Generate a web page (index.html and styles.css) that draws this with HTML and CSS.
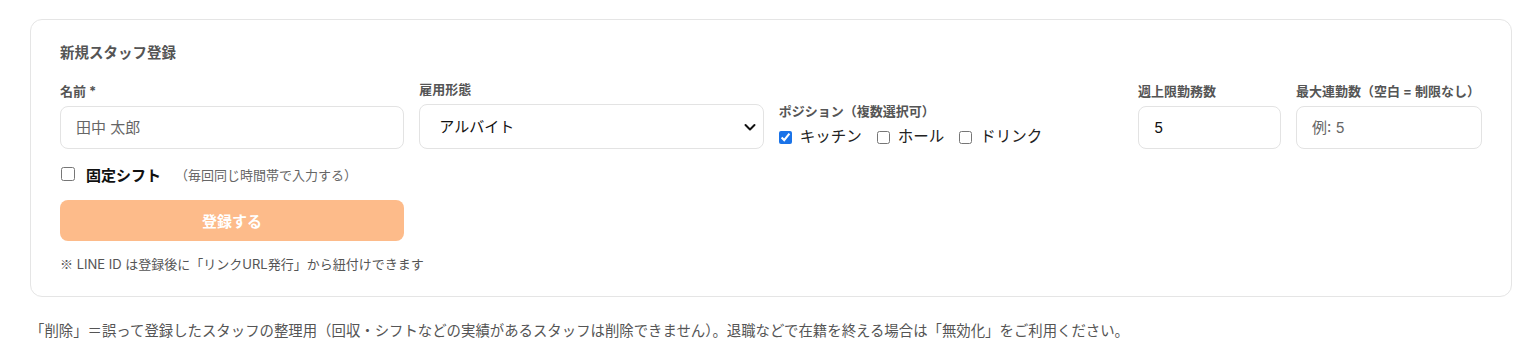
FILE: index.html
```html
<!DOCTYPE html>
<html lang="ja">
<head>
    <meta charset="UTF-8">
    <meta name="viewport" content="width=device-width, initial-scale=1.0">
    <title>スタッフ管理</title>
    <link rel="stylesheet" href="styles.css">
</head>
<body>
    <div class="page">
        <form class="card" id="staffForm">
            <h2 class="card-title">新規スタッフ登録</h2>

            <div class="field-row">
                <div class="field">
                    <label for="name">名前 *</label>
                    <input type="text" id="name" placeholder="田中 太郎">
                </div>

                <div class="field">
                    <label for="employment">雇用形態</label>
                    <select id="employment" class="select">
                        <option>アルバイト</option>
                        <option>パート</option>
                        <option>社員</option>
                    </select>
                </div>

                <div class="field">
                    <label>ポジション（複数選択可）</label>
                    <div class="check-group">
                        <label class="check"><input type="checkbox" checked> キッチン</label>
                        <label class="check"><input type="checkbox"> ホール</label>
                        <label class="check"><input type="checkbox"> ドリンク</label>
                    </div>
                </div>

                <div class="field">
                    <label for="weekly">週上限勤務数</label>
                    <input type="text" id="weekly" value="5">
                </div>

                <div class="field">
                    <label for="maxRun">最大連勤数（空白 = 制限なし）</label>
                    <input type="text" id="maxRun" placeholder="例: 5">
                </div>
            </div>

            <div class="fixed-shift">
                <input type="checkbox" id="fixed">
                <label for="fixed" class="fixed-label">固定シフト</label>
                <span class="hint">（毎回同じ時間帯で入力する）</span>
            </div>

            <button type="submit" class="submit" disabled>登録する</button>

            <p class="note"><span class="mark">※</span> LINE ID は登録後に「リンクURL発行」から紐付けできます</p>
        </form>

        <p class="footnote">「削除」＝誤って登録したスタッフの整理用（回収・シフトなどの実績があるスタッフは削除できません）。退職などで在籍を終える場合は「無効化」をご利用ください。</p>
    </div>
</body>
</html>
```

FILE: styles.css
```css
* {
    margin: 0;
    padding: 0;
    box-sizing: border-box;
    font-family: Inter, "Noto Sans CJK JP", sans-serif;
}

body {
    background: #fff;
    color: #222;
}

.page {
    padding: 19px 21px 0 30px;
}

.card {
    border: 1px solid #e5e5e5;
    border-radius: 12px;
    padding: 24px 29px 23px 29px;
    background: #fff;
}

.card-title {
    font-size: 14.5px;
    font-weight: 700;
    color: #555;
    margin-bottom: 18px;
    line-height: 18px;
}

.field-row {
    display: grid;
    grid-template-columns: 1fr 1fr 1fr 143px 186px;
    gap: 15px;
    align-items: end;
}

.field label {
    display: block;
    font-size: 13px;
    font-weight: 700;
    color: #555;
    line-height: 18px;
    margin-bottom: 6px;
}

.field input[type="text"],
.select {
    width: 100%;
    height: 43px;
    padding: 0 15px;
    border: 1px solid #e3e3e3;
    border-radius: 8px;
    font-size: 15px;
    color: #111;
    background: #fff;
    outline: none;
}

.field input::placeholder {
    color: #666;
}

.select {
    height: 45px;
    padding: 0 12px 0 19px;
    appearance: none;
    background-image: url("data:image/svg+xml,%3Csvg xmlns='http://www.w3.org/2000/svg' width='14' height='14' viewBox='0 0 14 14'%3E%3Cpath d='M2.5 5l4.5 4.5L11.5 5' fill='none' stroke='%23111' stroke-width='2' stroke-linecap='round' stroke-linejoin='round'/%3E%3C/svg%3E");
    background-repeat: no-repeat;
    background-position: right 6px center;
}

.check-group {
    display: flex;
    gap: 15px;
    height: 22px;
    align-items: center;
    margin-bottom: 1px;
}

.field .check {
    display: flex;
    align-items: center;
    gap: 8px;
    font-size: 15.5px;
    font-weight: 400;
    color: #222;
    margin: 0;
    line-height: 22px;
}

.check input,
.fixed-shift input {
    width: 13px;
    height: 13px;
    margin: 0;
    accent-color: #1a73e8;
}

.fixed-shift {
    display: flex;
    align-items: center;
    margin-top: 15px;
    height: 20px;
}

.fixed-shift input {
    width: 14px;
    height: 14px;
    margin-left: 1px;
}

.fixed-label {
    font-size: 15px;
    font-weight: 700;
    color: #111;
    margin-left: 11px;
}

.hint {
    font-size: 13px;
    color: #666;
    margin-left: 14px;
}

.submit {
    display: block;
    width: 344px;
    height: 41px;
    margin-top: 16px;
    border: none;
    border-radius: 8px;
    background: #fdbb8a;
    color: #fff;
    font-size: 15px;
    font-weight: 700;
}

.note {
    font-size: 13px;
    color: #555;
    margin-top: 14px;
    line-height: 18px;
}

.mark {
    font-family: "Noto Sans CJK JP", sans-serif;
}

.footnote {
    font-size: 14.4px;
    color: #555;
    margin-top: 24px;
    line-height: 20px;
}
```
